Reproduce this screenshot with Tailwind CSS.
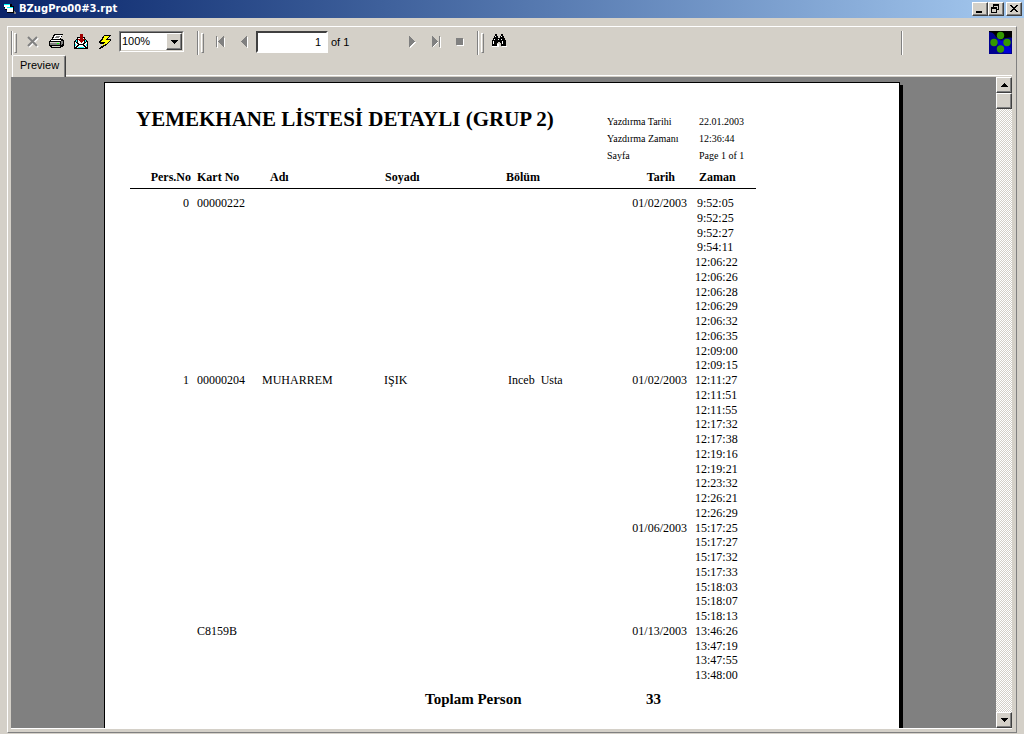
<!DOCTYPE html>
<html lang="tr">
<head>
<meta charset="utf-8">
<title>BZugPro00#3.rpt</title>
<script src="https://cdn.jsdelivr.net/npm/@tailwindcss/browser@4"></script>
</head>
<body class="flex h-screen flex-col overflow-hidden bg-[#d4d0c8] font-['Liberation_Sans',sans-serif] text-[11px] text-black">

<!-- Title bar -->
<header class="flex h-[18px] shrink-0 items-center bg-linear-to-r from-[#0a246a] to-[#a6caf0] pl-1 pr-[2px]">
  <svg class="h-3 w-3 shrink-0" viewBox="0 0 12 12" shape-rendering="crispEdges" aria-hidden="true">
    <path fill="#000" d="M0 1h8v2h2v7H3V7H1V5H0z"/>
    <path fill="#fff" d="M0 2h6v4H1V4H0zM3 4h6v5H3z"/>
    <path fill="#0ff" d="M0 1h6v1H0zM3 4h6v1H3z"/><path fill="#808080" d="M10 8h1v1h1v2h-2z"/>
  </svg>
  <h1 class="ml-[3px] flex-1 whitespace-nowrap font-['DejaVu_Sans',sans-serif] text-[10px] font-bold leading-4 text-white">BZugPro00#3.rpt</h1>
  <button type="button" aria-label="Minimize" class="h-[14px] w-4 border border-b-[#404040] border-l-white border-r-[#404040] border-t-white bg-[#d4d0c8] shadow-[inset_-1px_-1px_0_#808080]">
    <svg class="h-3 w-[14px]" viewBox="0 0 14 12" shape-rendering="crispEdges"><path d="M3 8h6v2H3z"/></svg>
  </button>
  <button type="button" aria-label="Restore" class="h-[14px] w-4 border border-b-[#404040] border-l-white border-r-[#404040] border-t-white bg-[#d4d0c8] shadow-[inset_-1px_-1px_0_#808080]">
    <svg class="h-3 w-[14px]" viewBox="0 0 14 12" shape-rendering="crispEdges"><path fill-rule="evenodd" d="M4 1h6v6H8V6h1V3H5v1H4zM2 4h6v6H2zM3 6v3h4V6z"/></svg>
  </button>
  <button type="button" aria-label="Close" class="ml-[2px] h-[14px] w-4 border border-b-[#404040] border-l-white border-r-[#404040] border-t-white bg-[#d4d0c8] shadow-[inset_-1px_-1px_0_#808080]">
    <svg class="h-3 w-[14px]" viewBox="0 0 14 12" shape-rendering="crispEdges"><path d="M3 2h2v1h1v1h2V3h1V2h2v1h-1v1H9v1H8v1h1v1h1v1h1v1H9V8H8V7H6v1H5v1H3V8h1V7h1V6h1V5H5V4H4V3H3z"/></svg>
  </button>
</header>

<main class="mx-[7px] mb-px mt-2 flex min-h-0 flex-1 flex-col border border-b-[#808080] border-l-white border-r-[#808080] border-t-white pb-[3px] pl-[3px] pr-1 pt-1">

  <!-- Toolbar -->
  <div role="toolbar" aria-label="Report" class="flex h-6 shrink-0 items-start">
    <span class="h-6 w-[2px] border-l border-r border-l-[#808080] border-r-white"></span>
    <span class="ml-px mt-[2px] h-5 w-[3px] border border-b-[#808080] border-l-white border-r-[#808080] border-t-white"></span>
    <button type="button" aria-label="Close view" class="ml-1 flex h-[22px] w-6 items-center justify-center">
      <svg class="h-3 w-3" viewBox="0 0 12 12" fill="none" stroke-width="2"><path stroke="#fff" d="M2 2l9 9M11 2l-9 9"/><path stroke="#808080" d="M1 1l9 9M10 1l-9 9"/></svg>
    </button>
    <button type="button" aria-label="Print" class="flex h-[22px] w-6 items-center justify-center">
      <svg class="h-4 w-4" viewBox="0 0 16 16" shape-rendering="crispEdges">
        <path d="M5 0h9v1h-1v2h-1v2h2v1h1v6h-1v1h-2v1H2v-1H1v-1H0V7h1V6h1V5h1V3h1V1h1z"/>
        <path fill="#fff" d="M6 1h7v1h-1v2h-1v1H4V4h1V2h1z"/><path d="M7 2h4v1H7zM6 4h4V3H6z" fill="#808080"/>
        <path fill="#fff" d="M3 6h9v1H2V6z"/><path fill="#d4d0c8" d="M1 8h10v1H1zM3 12h8v1H3z"/>
        <path fill="#808080" d="M1 9h10v2H1zM12 7h2v3h-1v1h-1z"/><path fill="#0f0" d="M8 9h2v1H8z"/>
      </svg>
    </button>
    <button type="button" aria-label="Export" class="flex h-[22px] w-6 items-center justify-center">
      <svg class="h-4 w-4" viewBox="0 0 16 16" shape-rendering="crispEdges">
        <path d="M4 3h8v2h1v1h1v1h1v8H1V7h1V6h1V5h1z"/><path fill="#fff" d="M5 4h6v5h-1v1H6V9H5zM2 8h1v1h1v1h1v1H4v1H3v1H2zM14 8h-1v1h-1v1h-1v1h1v1h1v1h1zM6 11h4v1h1v1h1v1H4v-1h1v-1h1z"/>
        <path fill="#0ff" d="M2 10h1v2H2zM13 10h1v2h-1zM5 13h6v1H5zM3 6h1v2H3zM12 6h1v2h-1z"/>
        <path fill="#a00000" d="M7 0h3v5h2v1h-1v1h-1v1H9v1H8V8H7V7H6V6H5V5h2z"/>
      </svg>
    </button>
    <button type="button" aria-label="Refresh" class="flex h-[22px] w-6 items-center justify-center">
      <svg class="h-4 w-4" viewBox="0 0 16 16" shape-rendering="crispEdges">
        <path d="M7 1h7v1h-1v1h-1v1h-1v1h3v2h-1v1h-1v1h-1v1h-1v1H9v1H7v1H6v1H4v1H2v-1h1v-1h1v-1h1v-1h1v-1H3V9H2V7h1V6h1V5h1V3h1z"/>
        <path fill="#ff0" d="M7 2h5v1h-1v1h-1v1H9v1h4v1h-1v1h-1v1h-1v1H8v1H6v1H5v-1h1v-1h1V9h1V8H4V7h1V6h1V4h1z"/>
      </svg>
    </button>
    <div class="relative ml-[2px] h-[21px] w-[65px] border border-b-white border-l-[#808080] border-r-white border-t-[#808080]">
      <select aria-label="Zoom" class="block h-[19px] w-full appearance-none rounded-none border border-b-[#d4d0c8] border-l-[#404040] border-r-[#d4d0c8] border-t-[#404040] bg-white pb-[2px] pl-px text-[11px] leading-4 outline-none"><option>100%</option></select>
      <span class="pointer-events-none absolute right-px top-px flex h-[17px] w-4 items-center justify-center border border-b-[#404040] border-l-white border-r-[#404040] border-t-white bg-[#d4d0c8] shadow-[inset_-1px_-1px_0_#808080]">
        <svg class="h-1 w-[7px]" viewBox="0 0 7 4" shape-rendering="crispEdges"><path d="M0 0h7v1H6v1H5v1H4v1H3V3H2V2H1V1H0z"/></svg>
      </span>
    </div>

    <span class="ml-[13px] h-6 w-[2px] border-l border-r border-l-[#808080] border-r-white"></span>
    <span class="ml-[2px] mt-[2px] h-5 w-[3px] border border-b-[#808080] border-l-white border-r-[#808080] border-t-white"></span>
    <button type="button" aria-label="First page" class="ml-1 flex h-[22px] w-6 items-center justify-center">
      <svg class="h-3 w-[10px]" viewBox="0 0 10 12" shape-rendering="crispEdges"><path fill="#fff" d="M2 1h1v11H2zM10 1v11l-5-5.500z"/><path fill="#808080" d="M1 0h1v11H1zM9 0v11L3 5.500z"/></svg>
    </button>
    <button type="button" aria-label="Previous page" class="flex h-[22px] w-6 items-center justify-center">
      <svg class="h-3 w-2" viewBox="0 0 8 12" shape-rendering="crispEdges"><path fill="#fff" d="M8 1v11L2 6.500z"/><path fill="#808080" d="M7 0v11L1 5.500z"/></svg>
    </button>
    <input type="text" aria-label="Page number" value="1" class="h-[22px] w-[72px] border-2 border-b-white border-l-[#404040] border-r-white border-t-[#404040] bg-white pr-[5px] text-right text-[11px] leading-4 outline-none">
    <span class="h-[22px] w-[72px] pl-[3px] leading-[22px]">of 1</span>
    <button type="button" aria-label="Next page" class="flex h-[22px] w-6 items-center justify-center">
      <svg class="h-3 w-2" viewBox="0 0 8 12" shape-rendering="crispEdges"><path fill="#fff" d="M2 1v11l6-5.500z"/><path fill="#808080" d="M1 0v11l6-5.500z"/></svg>
    </button>
    <button type="button" aria-label="Last page" class="flex h-[22px] w-6 items-center justify-center">
      <svg class="h-3 w-[10px]" viewBox="0 0 10 12" shape-rendering="crispEdges"><path fill="#fff" d="M2 1v11l5-5.500zM9 1h1v11H9z"/><path fill="#808080" d="M1 0v11l6-5.500zM8 0h1v11H8z"/></svg>
    </button>
    <button type="button" aria-label="Stop" class="flex h-[22px] w-6 items-center justify-center">
      <svg class="h-2 w-2" viewBox="0 0 8 8" shape-rendering="crispEdges"><path fill="#fff" d="M1 1h7v7H1z"/><path fill="#808080" d="M0 0h7v7H0z"/></svg>
    </button>

    <span class="ml-[5px] h-6 w-[2px] border-l border-r border-l-[#808080] border-r-white"></span>
    <span class="ml-[2px] mt-[2px] h-5 w-[3px] border border-b-[#808080] border-l-white border-r-[#808080] border-t-white"></span>
    <button type="button" aria-label="Search" class="ml-[3px] flex h-[22px] w-6 items-start justify-center pt-[3px]">
      <svg class="h-[14px] w-4" viewBox="0 0 16 14" shape-rendering="crispEdges">
        <path fill="#fff" d="M6 10h2v3H1v-1h5zM11 12h5v1h-5z"/>
        <path d="M4 0h2v2h1v2h2V2h1V0h2v2h1v2h1v2h1v6h-5V9H9V8H7v1H6v3H1V6h1V4h1V2h1z"/>
        <path fill="#fff" d="M4 2h1v1H4zM10 2h1v1h-1zM3 5h1v1H3zM10 5h1v1h-1zM2 7h1v3H2zM11 7h1v3h-1zM7 5h1v1H7z"/>
      </svg>
    </button>

    <span class="ml-auto h-6 w-[2px] border-l border-r border-l-[#808080] border-r-white"></span>
    <svg class="ml-[86px] h-[23px] w-[23px] shrink-0" viewBox="0 0 23 23" role="img" aria-label="Crystal Reports">
      <path fill="#000" d="M0 0h23v23H0z"/>
      <path fill="#000090" d="M0 1c4 0 6 3 7 5l5 3 4-2c3 0 6-1 7 0v16H0z"/>
      <path fill="#0000d8" d="M9 8l3 2 4-1v3l6 5v5h-7l-4-6-4-5z"/>
      <g fill="#339900"><circle cx="11.500" cy="4.500" r="3.700"/><circle cx="5" cy="11.500" r="3.700"/><circle cx="18" cy="11.500" r="3.700"/><circle cx="11.500" cy="18" r="3.700"/></g>
    </svg>
  </div>

  <!-- Tabs -->
  <div role="tablist" class="flex h-[22px] shrink-0 items-stretch">
    <button type="button" role="tab" aria-selected="true" class="ml-px rounded-t-[2px] border border-b-0 border-l-white border-r-[#404040] border-t-white pb-1 pl-[7px] pr-[6px] text-[11px] leading-4 shadow-[inset_-1px_0_0_#808080]">Preview</button>
    <span class="h-[2px] flex-1 self-end border-t border-white"></span>
  </div>

  <!-- Report viewport -->
  <div class="flex min-h-0 flex-1 border-b border-white bg-[#808080]">
    <div class="flex min-w-0 flex-1 justify-center overflow-hidden pr-[3px] pt-[5px]">
      <article class="w-[796px] shrink-0 border border-b-0 border-black bg-white pl-[25px] font-['Liberation_Serif',serif] shadow-[3px_3px_0_#000]">
        <div class="grid grid-cols-[477px_92px_auto] pb-[6px]">
          <h2 class="whitespace-nowrap pl-[6px] pt-6 text-[21px] font-bold leading-6">YEMEKHANE LİSTESİ DETAYLI (GRUP 2)</h2>
          <dl class="col-span-2 grid grid-cols-subgrid pt-[30px] text-[10px] leading-[17px]">
            <dt>Yazdırma Tarihi</dt><dd>22.01.2003</dd>
            <dt>Yazdırma Zamanı</dt><dd>12:36:44</dd>
            <dt>Sayfa</dt><dd>Page 1 of 1</dd>
          </dl>
        </div>
        <table class="w-[626px] table-fixed border-collapse text-[12px] leading-[14px]">
          <colgroup>
            <col class="w-[63px]"><col class="w-[65px]"><col class="w-[122px]"><col class="w-[124px]"><col class="w-[100px]"><col class="w-[87px]"><col class="w-[65px]">
          </colgroup>
          <thead>
            <tr class="h-[18px] border-b border-black text-left align-top">
              <th scope="col" class="pr-[2px] text-right">Pers.No</th><th scope="col" class="pl-1">Kart No</th><th scope="col" class="pl-3">Adı</th><th scope="col" class="pl-[5px]">Soyadı</th><th scope="col" class="pl-[2px]">Bölüm</th><th scope="col" class="pr-4 text-right">Tarih</th><th scope="col" class="pl-2">Zaman</th>
            </tr>
            <tr aria-hidden="true"><td colspan="7" class="h-[7px]"></td></tr>
          </thead>
          <tbody class="[&_td]:pl-1 [&_td]:whitespace-nowrap [&_tr]:h-[15px] [&_tr:nth-child(4n)]:h-[14px]">
            <tr><td class="pr-1 text-right">0</td><td>00000222</td><td></td><td></td><td></td><td class="pr-1 text-right">01/02/2003</td><td class="indent-[2px]">9:52:05</td></tr>
            <tr><td colspan="6"></td><td class="indent-[2px]">9:52:25</td></tr>
            <tr><td colspan="6"></td><td class="indent-[2px]">9:52:27</td></tr>
            <tr><td colspan="6"></td><td class="indent-[2px]">9:54:11</td></tr>
            <tr><td colspan="6"></td><td>12:06:22</td></tr>
            <tr><td colspan="6"></td><td>12:06:26</td></tr>
            <tr><td colspan="6"></td><td>12:06:28</td></tr>
            <tr><td colspan="6"></td><td>12:06:29</td></tr>
            <tr><td colspan="6"></td><td>12:06:32</td></tr>
            <tr><td colspan="6"></td><td>12:06:35</td></tr>
            <tr><td colspan="6"></td><td>12:09:00</td></tr>
            <tr><td colspan="6"></td><td>12:09:15</td></tr>
            <tr><td class="pr-1 text-right">1</td><td>00000204</td><td>MUHARREM</td><td>IŞIK</td><td>Inceb&nbsp; Usta</td><td class="pr-1 text-right">01/02/2003</td><td>12:11:27</td></tr>
            <tr><td colspan="6"></td><td>12:11:51</td></tr>
            <tr><td colspan="6"></td><td>12:11:55</td></tr>
            <tr><td colspan="6"></td><td>12:17:32</td></tr>
            <tr><td colspan="6"></td><td>12:17:38</td></tr>
            <tr><td colspan="6"></td><td>12:19:16</td></tr>
            <tr><td colspan="6"></td><td>12:19:21</td></tr>
            <tr><td colspan="6"></td><td>12:23:32</td></tr>
            <tr><td colspan="6"></td><td>12:26:21</td></tr>
            <tr><td colspan="6"></td><td>12:26:29</td></tr>
            <tr><td colspan="5"></td><td class="pr-1 text-right">01/06/2003</td><td>15:17:25</td></tr>
            <tr><td colspan="6"></td><td>15:17:27</td></tr>
            <tr><td colspan="6"></td><td>15:17:32</td></tr>
            <tr><td colspan="6"></td><td>15:17:33</td></tr>
            <tr><td colspan="6"></td><td>15:18:03</td></tr>
            <tr><td colspan="6"></td><td>15:18:07</td></tr>
            <tr><td colspan="6"></td><td>15:18:13</td></tr>
            <tr><td></td><td>C8159B</td><td></td><td></td><td></td><td class="pr-1 text-right">01/13/2003</td><td>13:46:26</td></tr>
            <tr><td colspan="6"></td><td>13:47:19</td></tr>
            <tr><td colspan="6"></td><td>13:47:55</td></tr>
            <tr><td colspan="6"></td><td>13:48:00</td></tr>
          </tbody>
        </table>
        <p class="grid grid-cols-[221px_auto] pl-[295px] pt-[9px] text-[15px] font-bold leading-4"><span>Toplam Person</span><span>33</span></p>
      </article>
    </div>

    <!-- Vertical scrollbar -->
    <div class="flex w-4 shrink-0 flex-col bg-[repeating-conic-gradient(#fff_0_25%,#d4d0c8_0_50%)] bg-size-[2px_2px]">
      <button type="button" aria-label="Scroll up" class="flex h-4 w-4 items-center justify-center border border-b-[#404040] border-l-white border-r-[#404040] border-t-white bg-[#d4d0c8] shadow-[inset_-1px_-1px_0_#808080]">
        <svg class="h-1 w-[7px]" viewBox="0 0 7 4" shape-rendering="crispEdges"><path d="M3 0h1v1h1v1h1v1h1v1H0V3h1V2h1V1h1z"/></svg>
      </button>
      <div class="h-4 w-4 border border-b-[#404040] border-l-white border-r-[#404040] border-t-white bg-[#d4d0c8] shadow-[inset_-1px_-1px_0_#808080]"></div>
      <button type="button" aria-label="Scroll down" class="mt-auto flex h-4 w-4 items-center justify-center border border-b-[#404040] border-l-white border-r-[#404040] border-t-white bg-[#d4d0c8] shadow-[inset_-1px_-1px_0_#808080]">
        <svg class="h-1 w-[7px]" viewBox="0 0 7 4" shape-rendering="crispEdges"><path d="M0 0h7v1H6v1H5v1H4v1H3V3H2V2H1V1H0z"/></svg>
      </button>
    </div>
  </div>
</main>
</body>
</html>
